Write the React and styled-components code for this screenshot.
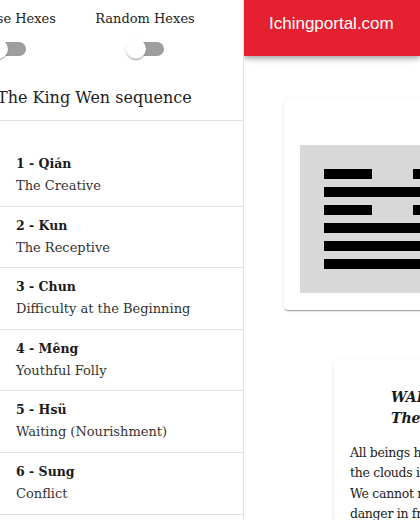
import React from 'react'
import styled, { createGlobalStyle } from 'styled-components'

const hexes = [
  { id: 1, name: 'Qián', meaning: 'The Creative' },
  { id: 2, name: 'Kun', meaning: 'The Receptive' },
  { id: 3, name: 'Chun', meaning: 'Difficulty at the Beginning' },
  { id: 4, name: 'Mêng', meaning: 'Youthful Folly' },
  { id: 5, name: 'Hsü', meaning: 'Waiting (Nourishment)' },
  { id: 6, name: 'Sung', meaning: 'Conflict' },
  { id: 7, name: 'Shih', meaning: 'The Army' },
]

// top to bottom, true = solid line
const waitingLines = [false, true, false, true, true, true]

const App = () => {
  return (
    <>
      <Global />
      <Page>
        <Sidebar>
          <Toggles>
            <ToggleGroup>
              <ToggleLabel>Reverse Hexes</ToggleLabel>
              <Switch><Track /><Thumb /></Switch>
            </ToggleGroup>
            <ToggleGroup>
              <ToggleLabel>Random Hexes</ToggleLabel>
              <Switch><Track /><Thumb /></Switch>
            </ToggleGroup>
          </Toggles>
          <SideTitle>The King Wen sequence</SideTitle>
          <HexList>
            {hexes.map((h) => (
              <HexItem key={h.id}>
                <Primary>{h.id} - {h.name}</Primary>
                <Secondary>{h.meaning}</Secondary>
              </HexItem>
            ))}
          </HexList>
        </Sidebar>
        <Main>
          <AppBar>
            <Brand>Ichingportal.com</Brand>
          </AppBar>
          <Content>
            <HexCard>
              <HexBox>
                {waitingLines.map((solid, i) => (
                  <HexLine key={i}>
                    {solid ? <Bar /> : <><Bar $half /><Bar $half /></>}
                  </HexLine>
                ))}
              </HexBox>
            </HexCard>
            <TextCard>
              <CardTitle>
                WAITING (NOURISHMENT)<br />
                The Judgement
              </CardTitle>
              <Body>
                All beings have need of nourishment from above, and the gift of food comes in its own time.<br />
                the clouds in the sky will bring rain, but only when the moment is right.<br />
                We cannot rush the coming of what we need; we must wait with calm strength.<br />
                danger in front of us is met by the one who knows how to wait.
              </Body>
            </TextCard>
          </Content>
        </Main>
      </Page>
    </>
  )
}

const Global = createGlobalStyle`
  html, body{
    margin:0;
    padding:0;
    overflow:hidden;
    background:#fff;
  }
  body{
    font-family:"DejaVu Serif", "Liberation Serif", serif;
    color:rgba(0,0,0,0.87);
  }
`

const Page = styled.div`
  display:flex;
  width:420px;
  height:520px;
  overflow:hidden;
`

const Sidebar = styled.div`
  flex:0 0 244px;
  box-sizing:border-box;
  border-right:1px solid #e0e0e0;
  overflow:hidden;
  height:100%;
`

const Toggles = styled.div`
  display:flex;
  margin-left:-62px;
  padding-top:7px;
`

const ToggleGroup = styled.div`
  width:138px;
  flex:0 0 138px;
  display:flex;
  flex-direction:column;
  align-items:center;
`

const ToggleLabel = styled.div`
  font-size:13px;
  line-height:23px;
  white-space:nowrap;
  color:#222;
`

const Switch = styled.div`
  position:relative;
  width:58px;
  height:38px;
  margin-left:2px;
`

const Track = styled.div`
  position:absolute;
  left:13px;
  top:12px;
  width:34px;
  height:14px;
  border-radius:7px;
  background:#9e9e9e;
`

const Thumb = styled.div`
  position:absolute;
  left:9px;
  top:9px;
  width:20px;
  height:20px;
  border-radius:50%;
  background:#fff;
  box-shadow:0px 2px 1px -1px rgba(0,0,0,0.2), 0px 1px 1px 0px rgba(0,0,0,0.14), 0px 1px 3px 0px rgba(0,0,0,0.12);
`

const SideTitle = styled.h2`
  margin:0 0 0 -3px;
  padding:14px 0 6px;
  font-size:16px;
  font-weight:400;
  line-height:32px;
  white-space:nowrap;
  color:#222;
  border-bottom:1px solid #e0e0e0;
`

const HexList = styled.ul`
  list-style:none;
  margin:0;
  padding:24px 0 0;
`

const HexItem = styled.li`
  padding:8px 16px 8.6px;
  border-bottom:1px solid #e0e0e0;
`

const Primary = styled.div`
  font-size:12.5px;
  font-weight:700;
  line-height:22px;
  color:#1a1a1a;
`

const Secondary = styled.div`
  font-size:13px;
  line-height:22px;
  color:#333;
  white-space:nowrap;
`

const Main = styled.div`
  flex:1 1 auto;
  min-width:0;
  overflow:hidden;
  position:relative;
`

const AppBar = styled.header`
  position:relative;
  z-index:1;
  height:56px;
  background:#e52030;
  box-shadow:0px 2px 4px -1px rgba(0,0,0,0.2), 0px 4px 5px 0px rgba(0,0,0,0.14), 0px 1px 10px 0px rgba(0,0,0,0.12);
  display:flex;
  align-items:flex-start;
  padding:13px 0 0 25px;
  box-sizing:border-box;
`

const Brand = styled.div`
  font-family:"Liberation Sans", Arial, sans-serif;
  font-size:17px;
  line-height:22px;
  color:#fff;
  white-space:nowrap;
`

const Content = styled.div`
  padding:41px 0 0 40px;
  display:flex;
  flex-direction:column;
  align-items:flex-start;
`

const HexCard = styled.div`
  width:500px;
  flex:0 0 auto;
  box-sizing:border-box;
  padding:48px 16px 17px;
  background:#fff;
  border-radius:4px;
  box-shadow:0px 2px 1px -1px rgba(0,0,0,0.2), 0px 1px 1px 0px rgba(0,0,0,0.14), 0px 1px 3px 0px rgba(0,0,0,0.12);
`

const HexBox = styled.div`
  background:#d8d8d8;
  padding:24px;
  display:flex;
  flex-direction:column;
  gap:8px;
`

const HexLine = styled.div`
  display:flex;
  width:137px;
  justify-content:space-between;
`

const Bar = styled.div`
  height:10px;
  width:${p => p.$half ? '48px' : '137px'};
  background:#000;
`

const TextCard = styled.div`
  margin:50px 0 0 50px;
  width:560px;
  flex:0 0 auto;
  box-sizing:border-box;
  padding:27px 16px 16px;
  background:#fff;
  border-radius:4px;
  box-shadow:0px 2px 1px -1px rgba(0,0,0,0.2), 0px 1px 1px 0px rgba(0,0,0,0.14), 0px 1px 3px 0px rgba(0,0,0,0.12);
`

const CardTitle = styled.div`
  padding-left:41px;
  font-size:14px;
  line-height:21px;
  font-weight:700;
  font-style:italic;
  color:#1a1a1a;
`

const Body = styled.p`
  margin:14px 0 0;
  font-size:12.5px;
  line-height:20.4px;
  color:#222;
  white-space:nowrap;
  letter-spacing:-0.3px;
`

export default App
